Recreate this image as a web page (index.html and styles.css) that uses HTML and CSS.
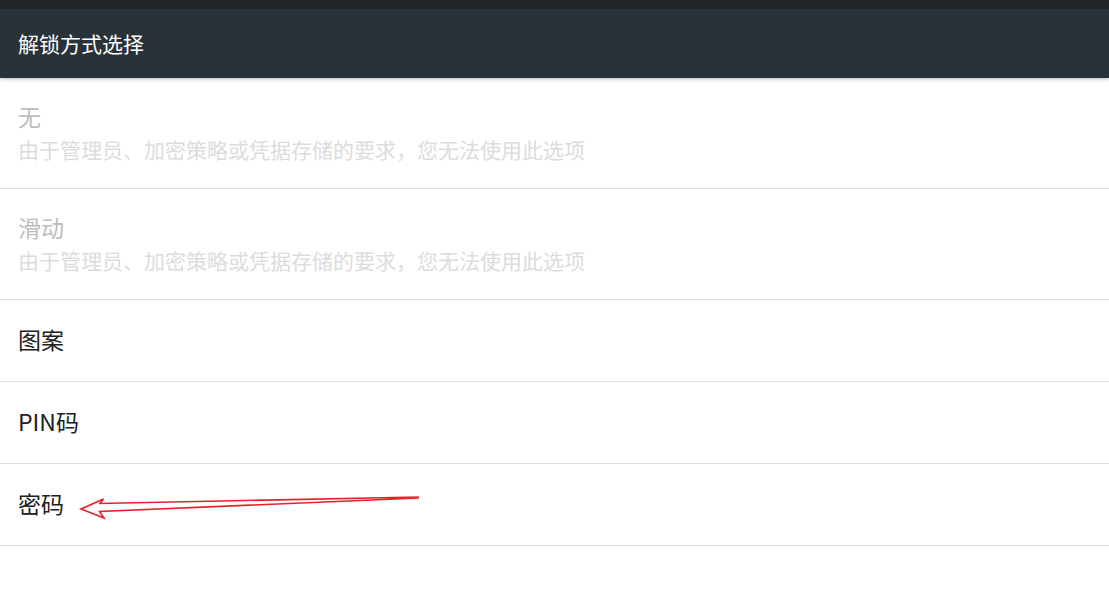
FILE: index.html
```html
<!DOCTYPE html>
<html lang="zh-CN">
<head>
<meta charset="utf-8">
<title>解锁方式选择</title>
<link rel="stylesheet" href="styles.css">
</head>
<body>
<div class="page">
  <div class="statusbar"></div>
  <header class="toolbar"><h1 class="toolbar-title">解锁方式选择</h1></header>
  <ul class="list">
    <li class="item item-two disabled">
      <div class="item-title">无</div>
      <div class="item-sub">由于管理员、加密策略或凭据存储的要求，您无法使用此选项</div>
    </li>
    <li class="item item-two disabled">
      <div class="item-title">滑动</div>
      <div class="item-sub">由于管理员、加密策略或凭据存储的要求，您无法使用此选项</div>
    </li>
    <li class="item"><div class="item-title">图案</div></li>
    <li class="item"><div class="item-title">PIN码</div></li>
    <li class="item"><div class="item-title">密码</div></li>
  </ul>
  <svg class="annotation" width="1109" height="603" viewBox="0 0 1109 603" xmlns="http://www.w3.org/2000/svg">
    <path d="M419 497 L100 503.5 L103.5 499 L81 509 L104 518 L99.5 511.5 L419 498" fill="none" stroke="#e8202a" stroke-width="1.6" stroke-linejoin="miter"/>
  </svg>
</div>
</body>
</html>
```
FILE: styles.css
```css
html, body {
  margin: 0;
  padding: 0;
  background: #ffffff;
}
body {
  font-family: "Noto Sans CJK SC", "Noto Sans", Roboto, sans-serif;
}
.page {
  position: relative;
  width: 1109px;
  height: 603px;
  overflow: hidden;
  background: #ffffff;
}
.statusbar {
  height: 9px;
  background: #212629;
}
.toolbar {
  position: relative;
  z-index: 2;
  height: 69px;
  background: #283238;
  display: flex;
  align-items: center;
  padding: 0 18px;
  box-shadow: 0 1px 4px rgba(0, 0, 0, 0.28);
}
.toolbar-title {
  margin: 0;
  font-size: 21px;
  font-weight: 400;
  color: #ffffff;
  line-height: 1;
}
.list {
  list-style: none;
  margin: 0;
  padding: 0;
}
.item {
  height: 78px;
  padding: 0 18px 3px;
  border-bottom: 1px solid #dedede;
  display: flex;
  flex-direction: column;
  justify-content: center;
  box-sizing: content-box;
}
.item-two {
  height: 110px;
  padding-bottom: 0;
}
.item-title {
  font-size: 23px;
  line-height: 32px;
  color: #212121;
}
.item-sub {
  font-size: 21px;
  line-height: 34px;
  color: #dcdcdc;
}
.disabled .item-title {
  color: #bdbdbd;
}
.annotation {
  position: absolute;
  left: 0;
  top: 0;
  pointer-events: none;
}
```
